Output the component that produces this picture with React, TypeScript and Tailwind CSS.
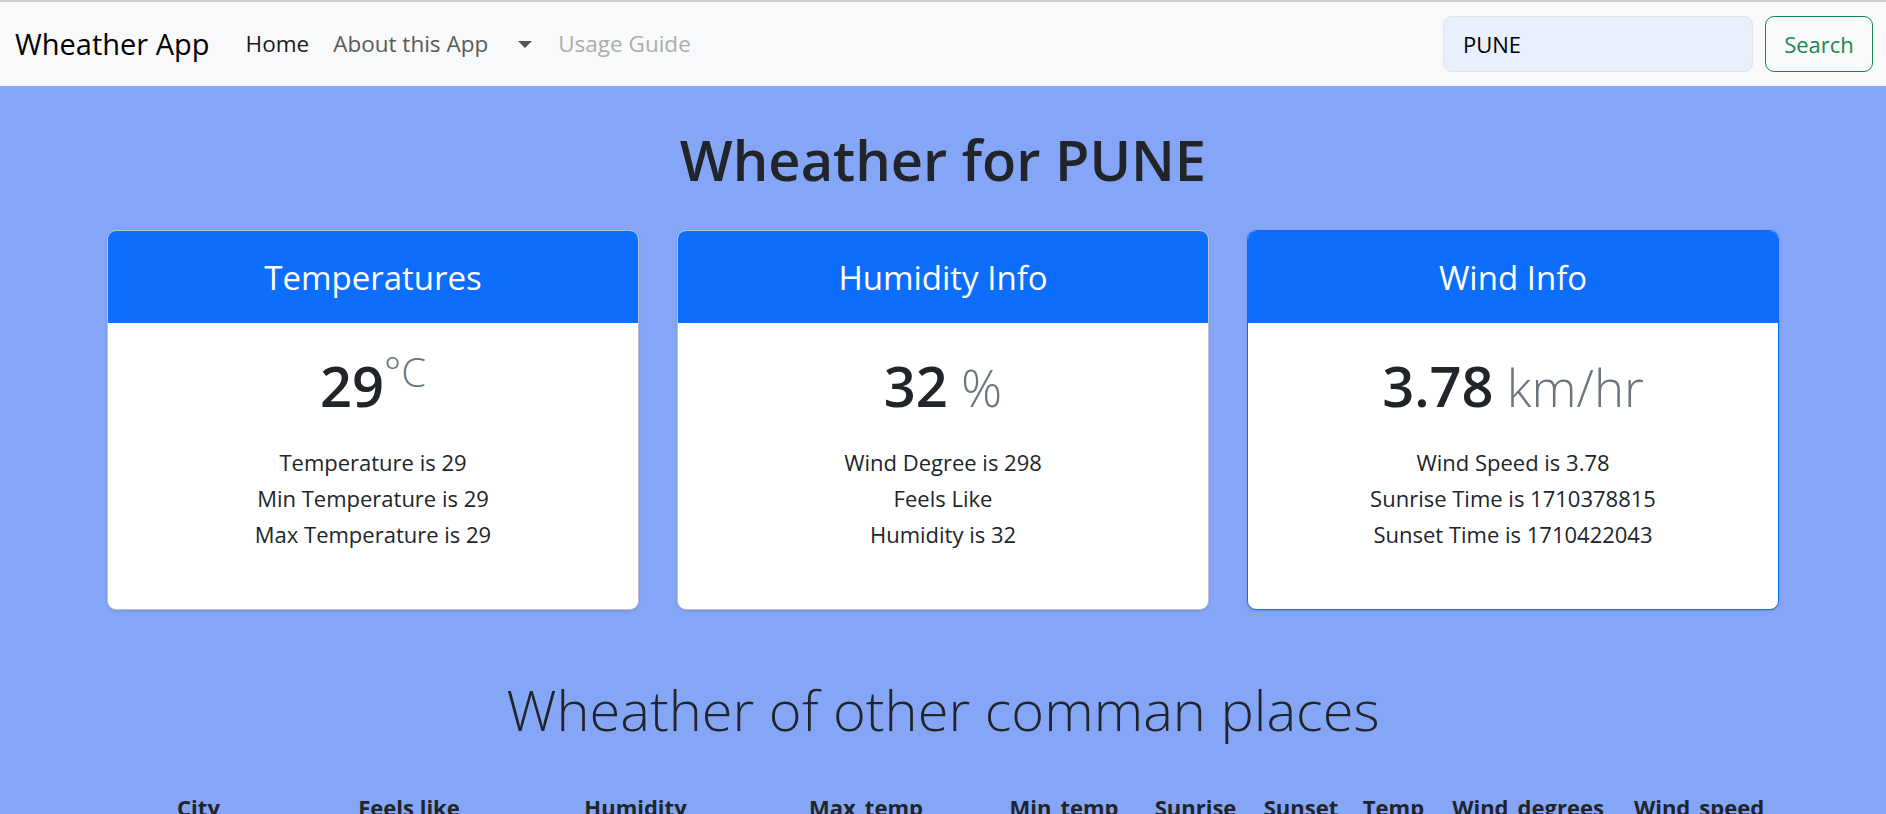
import React from "react";

const font = { fontFamily: '"Open Sans", "Noto Sans", sans-serif' };

type CardProps = {
  title: string;
  value: string;
  unit: string;
  sup?: boolean;
  lines: string[];
  blueBorder?: boolean;
};

function InfoCard({ title, value, unit, sup, lines, blueBorder }: CardProps) {
  return (
    <div
      className={`flex flex-col overflow-hidden rounded-[9px] border bg-white shadow-sm ${
        blueBorder ? "border-[#0d6efd]" : "border-[#b9c1d6]"
      }`}
    >
      <div className="h-[92px] bg-[#0d6efd] pt-[27px] text-center text-[33px] leading-[40px] text-white">
        {title}
      </div>
      <div className="flex flex-col items-center pt-[29px] pb-[57px] text-[#212529]">
        <div className="text-[56px] font-semibold leading-[67px]">
          {value}
          {sup ? (
            <span className="align-super text-[40px] font-light leading-[0] text-[#6c757d]">{unit}</span>
          ) : (
            <span className="text-[51px] font-light leading-[0] text-[#6c757d]"> {unit}</span>
          )}
        </div>
        <div className="mt-[25px] flex flex-col items-center text-[22px] leading-[36px]">
          {lines.map((l) => (
            <div key={l}>{l}</div>
          ))}
        </div>
      </div>
    </div>
  );
}

const cols = [
  "City",
  "Feels like",
  "Humidity",
  "Max_temp",
  "Min_temp",
  "Sunrise",
  "Sunset",
  "Temp",
  "Wind_degrees",
  "Wind_speed",
];

const rows = [
  ["Mumbai", "31", "58", "31", "30", "6:50", "18:41", "30", "270", "4.12"],
  ["Delhi", "24", "30", "25", "23", "6:34", "18:25", "24", "310", "3.05"],
  ["Bengaluru", "28", "35", "29", "27", "6:35", "18:36", "28", "120", "2.87"],
];

export default function App() {
  return (
    <div className="min-h-screen bg-[#85a6f7]" style={font}>
      <div className="h-[2px] bg-[#cdcdcd]" />
      <nav className="flex h-[84px] items-center bg-[#f8f9fa] pl-[15px] pr-[13px]">
        <div className="mr-[24px] text-[29px] leading-[36px] text-black">Wheather App</div>
        <div className="flex items-center text-[22.5px] leading-[36px]">
          <span className="px-[12px] text-[#1a1a1a]">Home</span>
          <span className="px-[12px] text-[#595959]">About this App</span>
          <span className="ml-[18px] mr-[26px] flex items-center">
            <svg width="14" height="7" viewBox="0 0 14 7">
              <path d="M0 0 L14 0 L7 7 Z" fill="#555" />
            </svg>
          </span>
          <span className="text-[#adadae]">Usage Guide</span>
        </div>
        <div className="ml-auto flex items-center gap-[12px]">
          <div className="flex h-[56px] w-[310px] items-center rounded-[9px] border border-[#dee2e6] bg-[#e8f0fe] px-[19px] text-[22px] text-black">
            PUNE
          </div>
          <button className="flex h-[56px] w-[108px] items-center justify-center rounded-[9px] border border-[#198754] text-[22px] text-[#198754]">
            Search
          </button>
        </div>
      </nav>

      <div className="mx-auto w-[1672px]">
        <h1 className="mt-[40px] text-center text-[56px] font-semibold leading-[67px] text-[#212529]">
          Wheather for PUNE
        </h1>
        <div className="mt-[37px] grid grid-cols-3 gap-[38px]">
          <InfoCard
            title="Temperatures"
            value="29"
            unit="°C"
            sup
            lines={["Temperature is 29", "Min Temperature is 29", "Max Temperature is 29"]}
          />
          <InfoCard
            title="Humidity Info"
            value="32"
            unit="%"
            lines={["Wind Degree is 298", "Feels Like", "Humidity is 32"]}
          />
          <InfoCard
            title="Wind Info"
            value="3.78"
            unit="km/hr"
            blueBorder
            lines={["Wind Speed is 3.78", "Sunrise Time is 1710378815", "Sunset Time is 1710422043"]}
          />
        </div>

        <h2 className="mt-[66px] text-center text-[56px] font-light leading-[67px] text-[#212529]">
          Wheather of other comman places
        </h2>

        <div className="mt-[34px] grid grid-cols-[183px_238px_215px_246px_150px_113px_98px_87px_182px_160px] text-[22px] leading-[36px] text-[#212529]">
          {cols.map((c) => (
            <div key={c} className="py-[12px] text-center font-bold">
              {c}
            </div>
          ))}
          {rows.map((r) =>
            r.map((v, i) => (
              <div key={r[0] + i} className="border-t border-[#6f87c8] py-[12px] text-center">
                {v}
              </div>
            ))
          )}
        </div>
      </div>
    </div>
  );
}
